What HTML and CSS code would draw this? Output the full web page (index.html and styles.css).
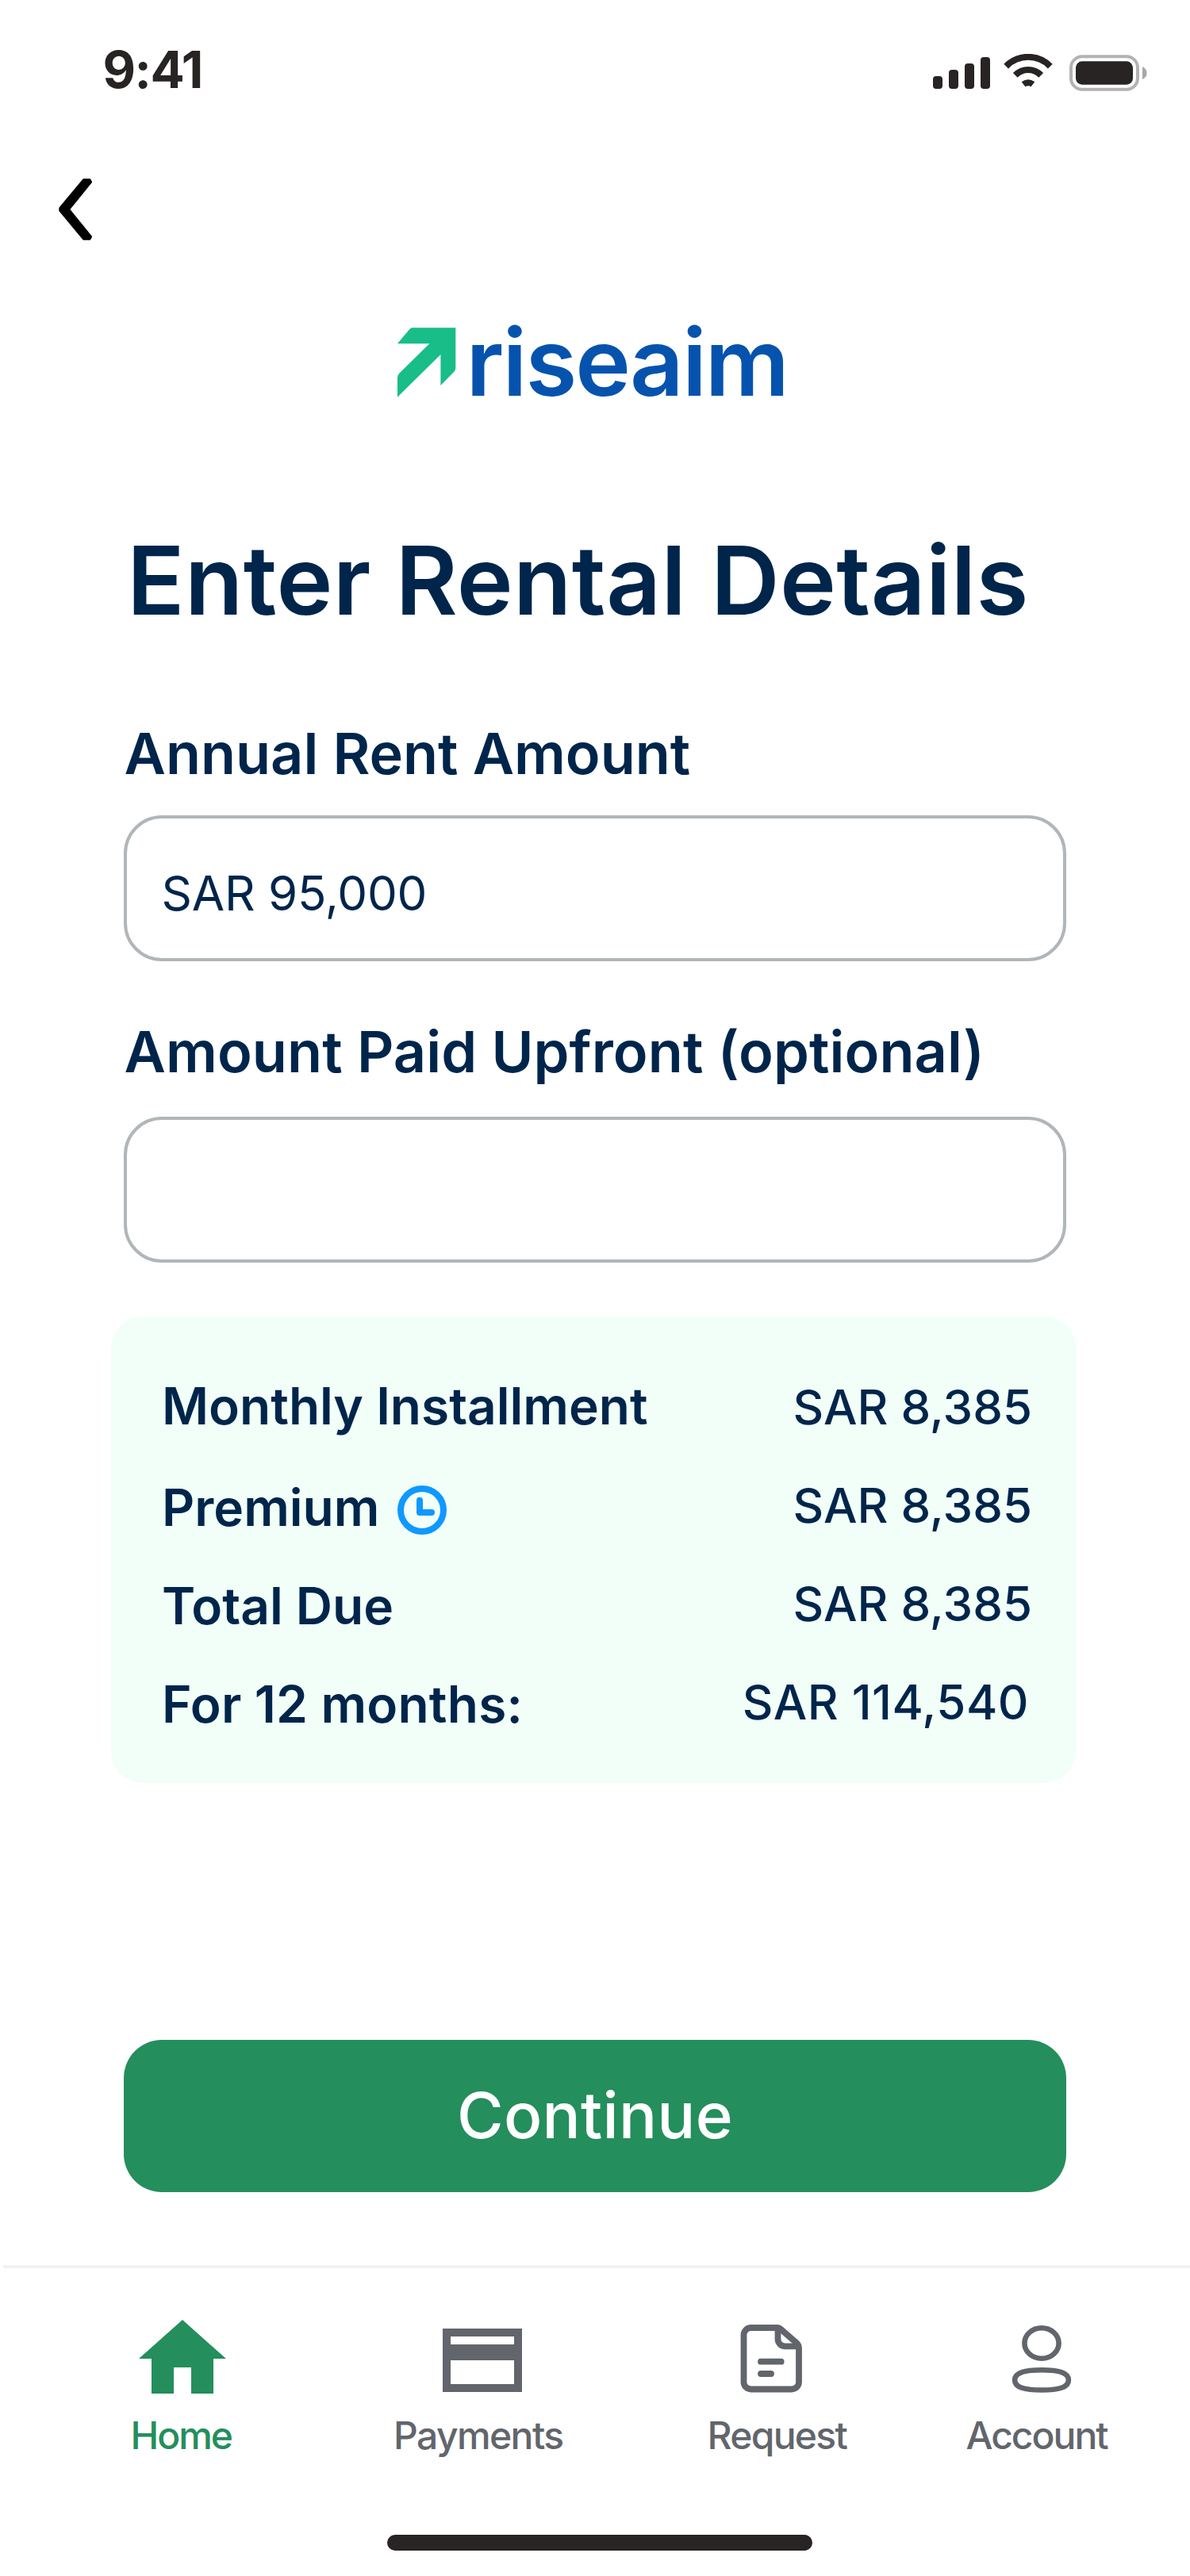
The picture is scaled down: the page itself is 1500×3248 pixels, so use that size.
FILE: index.html
```html
<!DOCTYPE html>
<html lang="en">
<head>
<meta charset="utf-8">
<title>Enter Rental Details</title>
<link rel="stylesheet" href="styles.css">
</head>
<body>
<div class="screen">
  <header class="status">
    <span class="time">9:41</span>
    <svg class="status-icons" viewBox="0 0 270 48" aria-hidden="true">
      <g fill="#282423">
        <rect x="0" y="28" width="12" height="16" rx="4"/>
        <rect x="20" y="20" width="12" height="24" rx="4"/>
        <rect x="40" y="12" width="12" height="32" rx="4"/>
        <rect x="60" y="4" width="12" height="40" rx="4"/>
        <path d="M111.7 35.3Q120 29 128.3 35.3L123.6 41.2Q120 39.2 116.4 41.2Z"/>
        <rect x="180" y="9.3" width="72" height="29.4" rx="8"/>
      </g>
      <g fill="none" stroke="#282423" stroke-width="8">
        <path d="M92.2 15.6A38.7 38.7 0 0 1 147.8 15.6"/>
        <path d="M103.8 26.9A22.5 22.5 0 0 1 136.2 26.9"/>
      </g>
      <rect x="174" y="3.3" width="84" height="41.4" rx="14" fill="none" stroke="#b4b3b3" stroke-width="4"/>
      <path d="M264 16Q269.5 18.5 269.5 24T264 32Z" fill="#a9a7a7"/>
    </svg>
  </header>

  <button class="back" aria-label="Back">
    <svg viewBox="0 0 42 78"><path d="M31.5 2H39L40.3 4.5L12.3 39L40.3 73.5L39 76H31.5L2 40.5V37.5Z" stroke="#000" stroke-width="3.4" stroke-linejoin="round"/></svg>
  </button>

  <div class="logo">
    <svg class="logo-mark" viewBox="0 0 75 88" aria-hidden="true"><path fill="#18bd88" d="M19 .3H74.3V51Q74.3 54 72 56L55.4 73V34L1 87.7V63Q1 60 3.5 57.5L41.4 20.3H1L15.5 3Q17 .8 19 .3Z"/></svg>
    <span class="logo-text">riseaim</span>
  </div>

  <main class="form">
    <h1 class="title">Enter Rental Details</h1>
    <label class="label label-rent" for="rent">Annual Rent Amount</label>
    <input class="field" id="rent" type="text" value="SAR 95,000">
    <label class="label label-upfront" for="upfront">Amount Paid Upfront (optional)</label>
    <input class="field" id="upfront" type="text">

    <section class="summary">
      <div class="names">
        <div class="name">Monthly Installment</div>
        <div class="name premium">Premium
          <svg class="clock" viewBox="0 0 62 62" fill="none" stroke="#1098ff" stroke-width="8" aria-hidden="true"><circle cx="31" cy="31" r="27"/><path d="M28 18.8V34H43" stroke-linecap="round" stroke-linejoin="round"/></svg>
        </div>
        <div class="name">Total Due</div>
        <div class="name months">For 12 months:</div>
      </div>
      <div class="values">
        <div>SAR 8,385</div>
        <div>SAR 8,385</div>
        <div>SAR 8,385</div>
        <div class="total">SAR 114,540</div>
      </div>
    </section>

    <button class="continue">Continue</button>
  </main>

  <nav class="tabs">
    <a class="tab active">
      <svg class="icon icon-home" viewBox="0 0 110 94"><path fill="currentColor" d="M55 1L110 50H94V94H66V61H44V94H16V50H0Z"/></svg>
      <span class="tab-home">Home</span>
    </a>
    <a class="tab">
      <svg class="icon icon-card" viewBox="0 0 100 94"><path fill="currentColor" fill-rule="evenodd" d="M0 12H100V92H0ZM10 22V32H90V22ZM10 52V82H90V52Z"/></svg>
      <span class="tab-payments">Payments</span>
    </a>
    <a class="tab">
      <svg class="icon icon-doc" viewBox="0 0 80 94" fill="none" stroke="currentColor" stroke-width="7.8" stroke-linecap="round" stroke-linejoin="round"><path d="M13.5 11H47Q49 11 50.5 12.2L71.5 30.5Q74 33 74 37V79.5A9 9 0 0 1 65 88.5H13.5A9 9 0 0 1 4.5 79.5V20A9 9 0 0 1 13.5 11Z"/><path d="M47.5 12V25.3A9 9 0 0 0 56.5 34.3H73M26 53.7H51.7M26 69H39"/></svg>
      <span class="tab-request">Request</span>
    </a>
    <a class="tab">
      <svg class="icon icon-user" viewBox="0 0 76 94" fill="none" stroke="currentColor" stroke-width="6.6"><ellipse cx="38" cy="30.5" rx="21.6" ry="19.3"/><path d="M4.1 76.9C4.1 67.5 16.5 64.3 38 64.3S71.9 67.5 71.9 76.9S59.5 89.5 38 89.5S4.1 86.3 4.1 76.9Z"/></svg>
      <span class="tab-account">Account</span>
    </a>
  </nav>
  <div class="home-bar"></div>
</div>
</body>
</html>
```
FILE: styles.css
```css
* { box-sizing: border-box; }

body {
  margin: 0;
  background: #fff;
  color: #00254b;
  font-family: Inter, "Liberation Sans", sans-serif;
}

svg { display: block; flex: none; }

button, input { font: inherit; color: inherit; margin: 0; }

.screen {
  display: flex;
  flex-direction: column;
  width: 1500px;
  height: 3248px;
  overflow: hidden;
}

/* Status bar */
.status {
  display: flex;
  justify-content: space-between;
  align-items: flex-start;
  height: 120px;
  padding: 56px 54px 0 129.5px;
}

.time {
  color: #282423;
  font-size: 64px;
  font-weight: 700;
  line-height: 64px;
  letter-spacing: -1.5px;
}

.status-icons { width: 270px; height: 48px; margin-top: 12px; }

.back {
  width: 42px;
  height: 78px;
  margin: 105px 0 0 74px;
  padding: 0;
  border: 0;
  background: none;
}

.back svg { width: 42px; height: 78px; }

/* Brand */
.logo {
  display: flex;
  align-items: flex-start;
  gap: 13px;
  height: 88px;
  margin: 110px 0 0 499.5px;
}

.logo-mark { width: 75px; height: 88px; }

.logo-text {
  color: #0653ae;
  font-size: 118px;
  font-weight: 600;
  line-height: 86px;
  letter-spacing: -2px;
}

/* Form */
.form {
  display: flex;
  flex-direction: column;
  width: 1188px;
  margin: 159.4px 0 0 156px;
}

.title {
  margin: 0 0 101.6px 4px;
  font-size: 120px;
  font-weight: 600;
  line-height: 144px;
  letter-spacing: 0.4px;
  white-space: nowrap;
}

.label {
  font-size: 72px;
  font-weight: 600;
  line-height: 88px;
  padding-left: 0.5px;
  white-space: nowrap;
}

.label-rent { margin-bottom: 34px; }

.label-upfront {
  margin: 70.3px 0 37.7px;
  letter-spacing: 0.1px;
}

.field {
  width: 1188px;
  height: 184px;
  padding: 13px 43.5px 0;
  border: 4px solid #b0b6b9;
  border-radius: 48px;
  background: #fff;
  font-size: 60px;
  line-height: 72px;
  letter-spacing: -0.2px;
  outline: 0;
}

.summary {
  display: flex;
  justify-content: space-between;
  align-items: flex-start;
  width: 1216px;
  height: 588px;
  margin: 68px 0 0 -16px;
  padding: 51.2px 55px 0 64px;
  border-radius: 40px;
  background: #f1fff8;
  line-height: 124px;
}

.names { font-size: 64px; font-weight: 600; }

.name:first-child { margin-bottom: 4px; }

.premium { display: flex; align-items: center; gap: 22.7px; }

.clock { width: 62px; height: 62px; margin-top: 5px; }

.months { letter-spacing: 0.2px; }

.values {
  margin-top: 1px;
  font-size: 60px;
  font-weight: 500;
  text-align: right;
}

.total { margin-right: 4px; letter-spacing: 0.5px; }

.continue {
  height: 192px;
  margin-top: 324px;
  padding: 0 0 3px;
  border: 0;
  border-radius: 48px;
  background: #248e5c;
  color: #fff;
  font-size: 80px;
  font-weight: 500;
  line-height: 189px;
  letter-spacing: 0.3px;
}

/* Bottom navigation */
.tabs {
  display: grid;
  grid-template-columns: 331.7px 395.4px 326px auto;
  margin: 92px 0 0 4px;
  padding: 64px 0 0 160.4px;
  border-top: 4px solid #f2f2f2;
}

.tab {
  color: #62656c;
  font-size: 48px;
  font-weight: 500;
  line-height: 60px;
}

.tab.active { color: #248e5c; }

.tab span { display: block; margin-top: 23px; }

.icon { height: 94px; }
.icon-home { width: 110px; margin-left: 10.6px; }
.icon-card { width: 100px; margin-left: 61.9px; }
.icon-doc { width: 80px; margin-left: 41.5px; }
.icon-user { width: 76px; margin-left: 57.5px; }

.tab-home { letter-spacing: -2px; }
.tab-payments { letter-spacing: -1.6px; }
.tab-request { letter-spacing: -1.7px; }
.tab-account { letter-spacing: -2px; }

.home-bar {
  width: 536px;
  height: 20px;
  margin: 95px 0 0 488px;
  border-radius: 10px;
  background: #282423;
}
```
